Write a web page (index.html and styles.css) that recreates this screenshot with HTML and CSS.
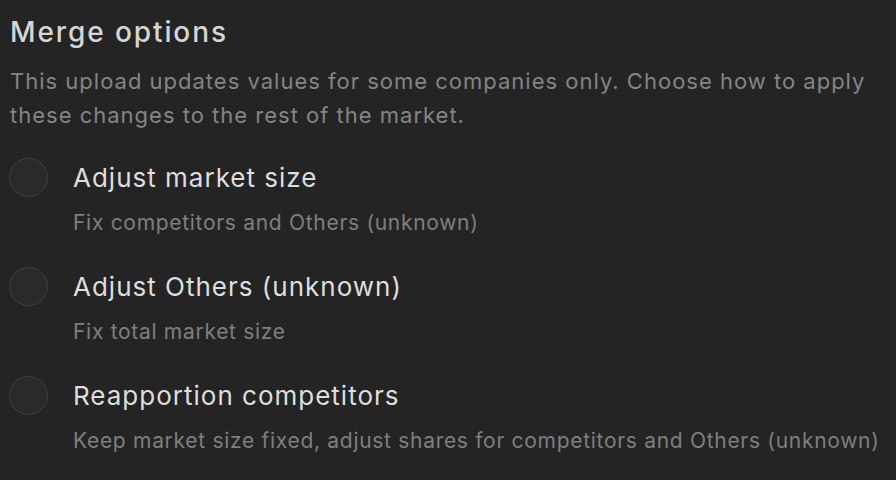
FILE: index.html
```html
<!DOCTYPE html>
<html>
<head>
<meta charset="utf-8">
<link rel="stylesheet" href="styles.css">
</head>
<body>
<div class="panel">
  <h1 class="title">Merge options</h1>
  <p class="desc">This upload updates values for some companies only. Choose how to apply these changes to the rest of the market.</p>
  <div class="options">
    <div class="option">
      <span class="radio"></span>
      <div class="text">
        <div class="label">Adjust market size</div>
        <div class="sub">Fix competitors and Others (unknown)</div>
      </div>
    </div>
    <div class="option">
      <span class="radio"></span>
      <div class="text">
        <div class="label">Adjust Others (unknown)</div>
        <div class="sub">Fix total market size</div>
      </div>
    </div>
    <div class="option">
      <span class="radio"></span>
      <div class="text">
        <div class="label">Reapportion competitors</div>
        <div class="sub">Keep market size fixed, adjust shares for competitors and Others (unknown)</div>
      </div>
    </div>
  </div>
</div>
</body>
</html>
```

FILE: styles.css
```css
html, body {
  margin: 0;
  padding: 0;
  background: #242424;
  font-family: Inter, "Noto Sans", sans-serif;
}
.panel {
  padding: 12px 10px 0 10px;
}
.title {
  margin: 0;
  font-size: 28px;
  font-weight: 500;
  line-height: 40px;
  letter-spacing: 1.9px;
  color: #d6d6d6;
}
.desc {
  margin: 12px 0 0 0;
  font-size: 22px;
  line-height: 34px;
  letter-spacing: 1px;
  color: #858585;
}
.options {
  display: flex;
  flex-direction: column;
  gap: 23px;
  margin-top: 26px;
}
.option {
  display: flex;
  align-items: flex-start;
  gap: 25px;
}
.radio {
  flex: none;
  width: 37px;
  height: 37px;
  border: 1.5px solid #404040;
  background: #2a2a2a;
  border-radius: 50%;
  margin-left: -1px;
}
.label {
  font-size: 26px;
  line-height: 40px;
  letter-spacing: 1px;
  color: #dedede;
}
.sub {
  margin-top: 4px;
  font-size: 21px;
  line-height: 42px;
  letter-spacing: 0.7px;
  color: #7f7f7f;
}
```
